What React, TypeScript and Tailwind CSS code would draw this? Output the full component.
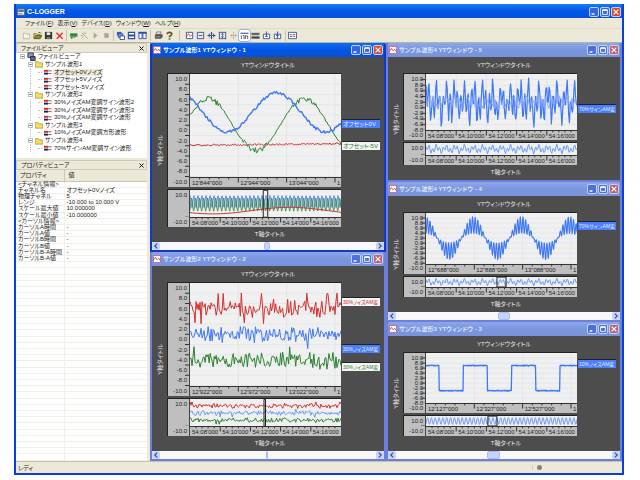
import type { ReactNode } from "react"

const BLUE = "#3f78f5"
const PALE_BLUE = "#6f9cf8"
const GREEN = "#2c8232"
const RED = "#d43030"

type Trace = { color: string; points: string; width?: number }
type Tag = { text: string; top: number; tone: "blue" | "red" | "green" }
type Scope = {
  title: string
  active?: boolean
  traces: Trace[]
  overview: Trace[]
  labels: string[]
  wide?: boolean
  cursor?: [number, number]
  tags: Tag[]
  thumb?: [number, number]
}

// small deterministic generator so the noise is the same on every render
function noise(seed: number) {
  let s = seed
  return () => {
    s = (s * 16807) % 2147483647
    return (s / 2147483647) * 2 - 1
  }
}

// fn gets 0..1 along the time axis and returns 0..100 down the plot
function trace(color: string, steps: number, fn: (t: number) => number, width = 1): Trace {
  const pts: string[] = []
  for (let i = 0; i <= steps; i++) {
    const t = i / steps
    pts.push(`${(t * 300).toFixed(1)},${fn(t).toFixed(1)}`)
  }
  return { color, points: pts.join(" "), width }
}

const wave = (t: number, peak: number, period: number) => Math.cos((2 * Math.PI * (t - peak)) / period)

function noisy(color: string, seed: number, center: number, amp: number, steps = 150) {
  const r = noise(seed)
  return trace(color, steps, () => {
    const v = r() * 0.6 + r() * 0.4
    return center + amp * v * (Math.abs(v) > 0.85 ? 1.5 : 1)
  })
}

const n1 = noise(71)
const n2 = noise(913)
const n3 = noise(417)
const n4 = noise(5521)
const n5 = noise(3313)

const beat = (t: number) => wave(t, 0.01, 0.0612) * 0.55 + wave(t, 0.02, 0.0235) * 0.75

const TIME = ["54:08'000", "54:10'000", "54:12'000", "54:14'000", "54:16'000"]
const VOLTS = ["10.0", "8.0", "6.0", "4.0", "2.0", "0.0", "-2.0", "-4.0", "-6.0", "-8.0", "-10.0"]

const LEFT: Scope[] = [
  {
    title: "サンプル波形1 YTウィンドウ - 1",
    active: true,
    traces: [
      trace(RED, 150, (t) => 69.5 - t * 1.5 + n1() * 0.9),
      trace(GREEN, 150, (t) => 49.5 - 25 * wave(t, 0.122, 0.635) + n2() * (Math.abs(wave(t, 0.122, 0.635)) > 0.7 ? 2.6 : 0.8)),
      trace(BLUE, 150, (t) => 37.5 - 19 * wave(t, 0.573, 0.65) + n3() * 1.4, 1.4),
    ],
    overview: [
      trace(BLUE, 300, (t) => 42 - 22 * wave(t, 0, 0.0265), 0.8),
      trace(GREEN, 300, (t) => 53 - 24 * wave(t, 0.011, 0.0265), 0.8),
      trace(RED, 60, (t) => 75 - 12 * wave(t, 0.66, 1.02)),
    ],
    labels: ["12'844\"000", "12'944\"000", "13'044\"000", "1"],
    wide: true,
    cursor: [48.5, 3],
    tags: [
      { text: "オフセット0V", top: 30, tone: "blue" },
      { text: "オフセット-5V", top: 44, tone: "green" },
    ],
    thumb: [48, 3],
  },
  {
    title: "サンプル波形2 YTウィンドウ - 2",
    traces: [noisy(RED, 331, 24.5, 11), noisy(BLUE, 8087, 50, 10), noisy(GREEN, 4409, 76, 10)],
    overview: [noisy(RED, 92, 25, 11), noisy(PALE_BLUE, 1207, 51, 11), noisy(GREEN, 6653, 77, 11)],
    labels: ["12'922\"000", "12'972\"000", "13'022\"000", "1"],
    wide: true,
    cursor: [49, 1],
    tags: [
      { text: "30%ノイズAM変", top: 10, tone: "red" },
      { text: "30%ノイズAM変", top: 40, tone: "blue" },
      { text: "30%ノイズAM変", top: 52, tone: "green" },
    ],
    thumb: [49, 1],
  },
]

const RIGHT: Scope[] = [
  {
    title: "サンプル波形4 YTウィンドウ - 5",
    traces: [
      trace(BLUE, 200, (t) => 50 - 30 * beat(t) + n4() * 9, 1.2),
      trace("#86a8fb", 150, () => 50 + n5() * 13),
    ],
    overview: [trace(PALE_BLUE, 150, (t) => 50 - 32 * beat(t))],
    labels: TIME,
    tags: [{ text: "70%サインAM変", top: 34, tone: "blue" }],
  },
  {
    title: "サンプル波形4 YTウィンドウ - 4",
    traces: [
      trace(BLUE, 400, (t) => {
        const e = wave(t, -0.005, 0.319)
        return 50 - 26 * e + 17 * Math.abs(e) * wave(t, 0, 0.0176)
      }, 1.1),
    ],
    overview: [trace(PALE_BLUE, 150, (t) => 50 - 30 * beat(t))],
    labels: ["12\"688\"000", "12\"888\"000", "13\"088\"000", "1"],
    wide: true,
    cursor: [47, 6],
    tags: [{ text: "70%サインAM変", top: 10, tone: "blue" }],
    thumb: [47, 6],
  },
  {
    title: "サンプル波形3 YTウィンドウ - 3",
    traces: [
      trace(BLUE, 400, (t) => (Math.floor((t + 0.0747) / 0.1602) % 2 === 0 ? 25 : 75) + n1() * 0.9, 1.3),
    ],
    overview: [trace(PALE_BLUE, 300, (t) => 50 - 34 * wave(t, 0.01, 0.0255))],
    labels: ["12'127\"000", "12'327\"000", "12'527\"000", "1"],
    wide: true,
    cursor: [41, 6],
    tags: [{ text: "10%ノイズAM変", top: 9, tone: "blue" }],
    thumb: [42, 6],
  },
]

const TREE = [
  { name: "サンプル波形1", items: ["オフセット0Vノイズ", "オフセット5Vノイズ", "オフセット-5Vノイズ"] },
  { name: "サンプル波形2", items: ["30%ノイズAM変調サイン波形2", "30%ノイズAM変調サイン波形3", "30%ノイズAM変調サイン波形"] },
  { name: "サンプル波形3", items: ["10%ノイズAM変調方形波形"] },
  { name: "サンプル波形4", items: ["70%サインAM変調サイン波形"] },
]

const PROPS: [string, string][] = [
  ["<チャネル情報>", ""],
  ["チャネル名", "オフセット0Vノイズ"],
  ["物理チャネル", "5"],
  ["レンジ", "-10.000 to 10.000 V"],
  ["スケール最大値", "10.000000"],
  ["スケール最小値", "-10.000000"],
  ["<カーソル情報>", ""],
  ["カーソルA時間", "-"],
  ["カーソルA値", "-"],
  ["カーソルB時間", "-"],
  ["カーソルB値", "-"],
  ["カーソルB-A時間", "-"],
  ["カーソルB-A値", "-"],
]
const BLANK_ROWS = 32

const MENU = [
  ["ファイル", "F"],
  ["表示", "V"],
  ["デバイス", "D"],
  ["ウィンドウ", "W"],
  ["ヘルプ", "H"],
]

const NAVY = "#3a4f9c"
const TOOLS: { gap: string; items: { label: string; art: ReactNode; on?: boolean }[] }[] = [
  {
    gap: "",
    items: [
      { label: "新規", art: <path d="M1.5 2.5h3l1 1h3v5h-7z" fill="#f6f4ea" stroke="#b9b6a8" /> },
      { label: "開く", art: <><path d="M1 8V3h3l1 1h3v1" fill="#f2dc5a" stroke="#5f5a20" strokeWidth=".8" /><path d="M1 8.5l2-3.5h7L8 8.5z" fill="#8d8a28" stroke="#3c3a10" strokeWidth=".7" /><path d="M6 2q2-1.500 3 .8" fill="none" stroke="#222" strokeWidth=".8" /></> },
      { label: "保存", art: <><path d="M1 1h8v8H1z" fill="#32362e" /><path d="M3 1.500h4v3H3z" fill="#e8e8e0" /><path d="M3 6.500h4V9H3z" fill="#777a6c" /></> },
      { label: "削除", art: <path d="M1.5 2l7 6.500M8.500 2L2 8.500" stroke="#d8302c" strokeWidth="1.5" fill="none" /> },
    ],
  },
  {
    gap: "ml-px border-l border-[#c5c2b2] pl-px",
    items: [
      { label: "デバイス", art: <><path d="M1 2.500h8.500v4H1z" fill="#3d9a50" /><path d="M2 6.500h2v2H2zM5 6.500h2v1H5z" fill="#657a4c" /><path d="M3 3.500h2v1.500H3zM6 3.500h2v1.500H6z" fill="#256b38" /></> },
      { label: "設定", art: <path d="M2 2l6.500 6.500M4.500 1v2M1 5h2M7 2L5.500 3.500M2 8l2-2" stroke="#aaa795" strokeWidth="1" fill="none" /> },
      { label: "開始", art: <path d="M3 1.500L7 5 3 8.500z" fill="#a6a596" /> },
      { label: "停止", art: <path d="M2.500 2.500h5v5h-5z" fill="#a6a596" /> },
    ],
  },
  {
    gap: "ml-px border-l border-[#c5c2b2] pl-px",
    items: [
      { label: "重ねて表示", art: <><path d="M1 1h5v4H1z" fill="#3c5ab8" /><path d="M2.500 3h5v4h-5z" fill="#7d98dc" stroke="#2c469c" strokeWidth=".8" /><path d="M4.500 5.500h5v4h-5z" fill="#fff" stroke="#2c469c" /></> },
      { label: "上下に並べて表示", art: <path d="M1.500 1.500h7v3h-7zM1.500 5.500h7v3h-7z" fill="#fff" stroke="#2c4cb0" strokeWidth="1.2" /> },
      { label: "左右に並べて表示", art: <><path d="M1 1.500h3.500v7H1zM5.500 1.500H9v7H5.500z" fill="#fff" stroke="#2c4cb0" /><path d="M.5 2h9" stroke="#2c4cb0" strokeWidth="2" /></> },
    ],
  },
  {
    gap: "ml-0.5 border-l border-[#c5c2b2] pl-0.5",
    items: [
      { label: "印刷", art: <><path d="M3 1h5l-1 3H2z" fill="#ddd" stroke="#444" strokeWidth=".6" /><path d="M1 4.500L3 3.500h6.500V7l-2 1.500H1z" fill="#56544e" /><path d="M2 6.500h5" stroke="#bbb" strokeWidth=".8" /></> },
      { label: "ヘルプ", art: <><path d="M2.500 3.500q0-2 2.500-2t2.500 2q0 1-2.500 2.500V7" fill="none" stroke="#5c5a18" strokeWidth="1.8" /><path d="M4 8h2v1.500H4z" fill="#5c5a18" /></> },
    ],
  },
  {
    gap: "ml-1 border-l border-[#c5c2b2] pl-1",
    items: [
      { label: "波形ウィンドウ", art: <><path d="M1.500 1.500h7v7h-7z" fill="#fff" stroke={NAVY} /><path d="M2 6l2-3 2 3 2-2" fill="none" stroke={RED} strokeWidth=".9" /></> },
      { label: "幅を合わせる", art: <><path d="M1.500 1v8M8.500 1v8" stroke={NAVY} /><path d="M2 1.500h6M2 8.500h6M3 5h4" stroke={NAVY} strokeWidth="1" /></> },
      { label: "横軸拡大", art: <path d="M5 1v8M0.500 5h9M2.500 3v4M7.500 3v4M4 2.500h2M4 7.500h2" stroke={NAVY} strokeWidth="1.1" /> },
      { label: "縦軸拡大", art: <><path d="M1 1.500h8M1 8.500h8M1.500 1v8M8.500 1v8" stroke={NAVY} /><path d="M5 2.500v5M3.800 4L5 2.500 6.200 4M3.800 6L5 7.500 6.200 6" stroke={NAVY} fill="none" strokeWidth=".8" /></> },
      { label: "自動調整", art: <path d="M5 1v3M5 6v3M1 5h8M3 3.500v3M7 3.500v3" stroke="#b5b2a2" /> },
      { label: "目盛", on: true, art: <><path d="M.5 2.500h9" stroke={NAVY} strokeWidth="1.2" /><path d="M1.500 5v4M3 5h1.500v4M6 5v4M6 5.500h2.500V9" stroke="#555" strokeWidth="1" /></> },
      { label: "全体表示", art: <><path d="M0.500 2h9v2.500h-9z" fill="#666" /><path d="M0.500 6h9v2.500h-9z" fill="#444" /><path d="M1 5.200h8" stroke="#9ab" strokeDasharray="1 1" /></> },
      { label: "カーソルA", art: <><path d="M1.500 3.500h7v5h-7z" fill="#fff" stroke={NAVY} /><path d="M5 .5V6M3.500 6h3" stroke={NAVY} /></> },
      { label: "カーソルB", art: <><path d="M1.500 3.500h7v5h-7z" fill="#fff" stroke={NAVY} /><path d="M5 .5V8M3.500 5h3" stroke={NAVY} /></> },
    ],
  },
  {
    gap: "ml-0.5 border-l border-[#c5c2b2] pl-px",
    items: [
      { label: "表示設定", art: <><path d="M.5 1.500h9v7h-9z" fill="#fff" stroke={NAVY} /><path d="M2 4h2M5 4h3M2 6h3M6 6h2" stroke="#556" strokeWidth="1" /></> },
    ],
  },
]

function Icon({ children, className = "size-[10px]" }: { children: ReactNode; className?: string }) {
  return (
    <svg viewBox="0 0 10 10" className={`${className} block shrink-0`} fill="none" aria-hidden="true">
      {children}
    </svg>
  )
}

function Captions({ dim }: { dim?: boolean }) {
  const base = "grid size-[10px] place-items-center rounded-[2px] border border-[#c3d3f8]"
  const blue = dim ? "bg-[#4a70dc]" : "bg-[#3267e6]"
  return (
    <div className="flex shrink-0 gap-px pr-px">
      <button aria-label="最小化" className={`${base} ${blue}`}>
        <Icon className="size-[8px]"><path d="M2 7.500h3.500" stroke="#fff" strokeWidth="1.8" /></Icon>
      </button>
      <button aria-label="最大化" className={`${base} ${blue}`}>
        <Icon className="size-[8px]"><path d="M2 2.500h6v5.500H2z" stroke="#fff" strokeWidth="1.1" /><path d="M2 2.500h6" stroke="#fff" strokeWidth="1.8" /></Icon>
      </button>
      <button aria-label="閉じる" className={`${base} ${dim ? "bg-[#c0606e]" : "bg-[#e0492e]"}`}>
        <Icon className="size-[8px]"><path d="M2 2l6 6M8 2L2 8" stroke="#fff" strokeWidth="1.6" /></Icon>
      </button>
    </div>
  )
}

function Plot({ traces, cols, rows, cursor }: { traces: Trace[]; cols: number[]; rows: number[]; cursor?: [number, number] }) {
  return (
    <div className="relative min-h-0 flex-1 bg-[#f0f0f0]">
      <svg viewBox="0 0 300 100" preserveAspectRatio="none" className="absolute inset-0 size-full">
        {rows.map((y) => <path key={y} d={`M0 ${y}H300`} stroke="#e3e6ea" vectorEffect="non-scaling-stroke" />)}
        {cols.map((x) => <path key={x} d={`M${x * 3} 0V100`} stroke="#e0e4ea" vectorEffect="non-scaling-stroke" />)}
        {traces.map((t, i) => (
          <polyline key={i} points={t.points} fill="none" stroke={t.color} strokeWidth={t.width}
            strokeLinejoin="round" vectorEffect="non-scaling-stroke" />
        ))}
        {cursor && (
          <rect x={cursor[0] * 3} y="1" width={cursor[1] * 3} height="98" fill="none" stroke="#222"
            vectorEffect="non-scaling-stroke" />
        )}
      </svg>
    </div>
  )
}

function Axis({ labels, wide }: { labels: string[]; wide?: boolean }) {
  const step = wide ? 32 : 20
  const minor = Array.from({ length: wide ? 15 : 24 }, (_, i) => (i + 1) * (step / 5))
  return (
    <div className="relative flex h-[10px] shrink-0 overflow-hidden border-t border-[#333] bg-[#bfbfbf]">
      <svg viewBox="0 0 100 10" preserveAspectRatio="none" className="absolute inset-0 size-full">
        {minor.map((x, i) => (
          <path key={i} d={`M${x} 0V${i % 5 === 4 ? 5 : 1.5}`} stroke="#333" vectorEffect="non-scaling-stroke" />
        ))}
      </svg>
      {labels.map((l, i) => (
        <span key={i} className={`relative shrink-0 whitespace-nowrap pl-0.5 pt-px text-[6px] leading-[8px] text-[#222] ${!wide ? "w-1/5" : i < 3 ? "w-[32%]" : "w-[4%]"}`}>
          {l}
        </span>
      ))}
    </div>
  )
}

function Gutter({ labels, ticks }: { labels: string[]; ticks: number[] }) {
  return (
    <div className="relative w-[22px] shrink-0 border-r border-[#444] bg-[#bfbfbf]">
      <div className="flex h-full flex-col justify-between py-[5px] pr-0.5 text-right text-[6px] text-[#222]">
        {labels.map((l) => (
          <span key={l} className="flex h-0 items-center justify-end leading-none">{l}</span>
        ))}
      </div>
      <svg viewBox="0 0 4 100" preserveAspectRatio="none" className="absolute right-0 top-0 h-[calc(100%-10px)] w-1">
        {ticks.map((y) => <path key={y} d={`M0 ${y}H4`} stroke="#333" vectorEffect="non-scaling-stroke" />)}
      </svg>
    </div>
  )
}

const TONES = {
  blue: "bg-[#4a7dff] text-[#e6edff]",
  red: "bg-[#f4f4f4] text-[#c03030]",
  green: "bg-[#f4f4f4] text-[#2c8232]",
}

const TENTHS = [10, 20, 30, 40, 50, 60, 70, 80, 90, 100]

function ScopeWindow({ scope }: { scope: Scope }) {
  const { active, thumb } = scope
  const cols = scope.wide ? [32, 64, 96] : [20, 40, 60, 80]
  return (
    <section className={`flex min-h-0 min-w-0 flex-col overflow-hidden rounded-t-[3px] border-x-2 border-b-2 ${active ? "border-[#1238c8] bg-[#1238c8]" : "border-[#6b80dc] bg-[#6b80dc]"}`}>
      <header className={`flex h-[14px] shrink-0 items-center gap-0.5 pl-px text-white ${active ? "bg-linear-to-b from-[#0f6cf2] via-[#0455e4] to-[#0450dc]" : "bg-linear-to-b from-[#8ea6ea] via-[#7a96df] to-[#7a92dc]"}`}>
        <Icon className="size-[8px]">
          <path d="M.5.500h9v9h-9z" fill="#fff" stroke="#c8507a" />
          <path d="M1 6l2-3 2 3 2-2 2 3" stroke="#d03030" />
        </Icon>
        <h2 className={`flex-1 whitespace-nowrap text-[6px] font-bold leading-[8px] ${active ? "" : "text-[#dfe7fb]"}`}>{scope.title}</h2>
        <Captions dim={!active} />
      </header>
      <div className="flex min-h-0 flex-1 flex-col bg-[#4d4d4d] text-[6px] text-[#e8e8e8]">
        <div className="h-4 shrink-0 text-center leading-4">YTウィンドウタイトル</div>
        <div className="flex min-h-0 flex-1">
          <div className="grid w-[15px] shrink-0 place-items-center">
            <span className="rotate-180 whitespace-nowrap leading-[8px] [text-orientation:sideways] [writing-mode:vertical-rl]">Y軸タイトル</span>
          </div>
          <div className="flex min-w-0 flex-1 flex-col gap-0.5">
            <div className="flex min-h-0 flex-3 border-l border-t border-[#222]">
              <Gutter labels={VOLTS} ticks={TENTHS} />
              <div className="flex min-w-0 flex-1 flex-col">
                <Plot traces={scope.traces} cols={cols} rows={TENTHS} />
                <Axis labels={scope.labels} wide={scope.wide} />
              </div>
            </div>
            <div className="flex min-h-0 flex-1 border-l border-t border-[#222]">
              <Gutter labels={["10.0", "-10.0"]} ticks={[99]} />
              <div className="flex min-w-0 flex-1 flex-col">
                <Plot traces={scope.overview} cols={[]} rows={[50]} cursor={scope.cursor} />
                <Axis labels={TIME} />
              </div>
            </div>
          </div>
          <div className="relative w-[43px] shrink-0">
            {scope.tags.map((t, i) => (
              <span key={i} style={{ top: `${t.top}%` }}
                className={`absolute left-px right-1 h-[9px] whitespace-nowrap border-t border-[#222] pl-px leading-[8px] ${t.text.length > 8 ? "text-[5px]" : ""} ${TONES[t.tone]}`}>
                {t.text}
              </span>
            ))}
          </div>
        </div>
        <div className="h-[15px] shrink-0 pl-1 text-center leading-[15px]">T軸タイトル</div>
      </div>
      {thumb && (
        <div className="flex h-2 shrink-0 bg-[#f8f8fc]">
          <button aria-label="左へ" className="grid w-2 place-items-center rounded-[2px] bg-[#c6d4fb]">
            <Icon className="size-[6px]"><path d="M7 1L3 5l4 4" stroke="#3c5090" strokeWidth="2" /></Icon>
          </button>
          <div className="relative flex-1">
            <div className="absolute inset-y-0 rounded-[2px] border border-[#a9bdf2] bg-[#c6d4fb]"
              style={{ left: `${thumb[0]}%`, width: `${thumb[1]}%` }} />
          </div>
          <button aria-label="右へ" className="grid w-2 place-items-center rounded-[2px] bg-[#c6d4fb]">
            <Icon className="size-[6px]"><path d="M3 1l4 4-4 4" stroke="#3c5090" strokeWidth="2" /></Icon>
          </button>
        </div>
      )}
    </section>
  )
}

function PanelTitle({ children }: { children: ReactNode }) {
  return (
    <div className="flex h-[10px] shrink-0 items-center justify-between border border-[#cfccbb] bg-[#ece9d8] pl-1 pr-0.5 leading-[8px]">
      <span>{children}</span>
      <button aria-label="閉じる"><Icon className="size-[5px]"><path d="M1 1l8 8M9 1L1 9" stroke="#111" strokeWidth="2" /></Icon></button>
    </div>
  )
}

function Expander() {
  return (
    <Icon className="size-[5px]"><path d="M.8.800h8.400v8.400H.8z" fill="#fff" stroke="#98a6bd" strokeWidth="1.6" /><path d="M3 5h4" stroke="#333" strokeWidth="1.6" /></Icon>
  )
}

function FileTree() {
  return (
    <ul className="flex h-[105px] shrink-0 flex-col bg-white pb-[6px] pl-1 leading-[7px] whitespace-nowrap">
      <li className="flex min-h-0 flex-1 items-center gap-0.5">
        <Expander />
        <Icon className="size-[9px]">
          <path d="M1 1h6v5H1z" fill="#8d9cb8" stroke="#333c50" />
          <path d="M4 5h5v4.500H4z" fill="#5a6a8c" stroke="#222a3c" />
        </Icon>
        ファイルビューア
      </li>
      {TREE.map((g, gi) => [
        <li key={g.name} className="ml-2 flex min-h-0 flex-1 items-center gap-0.5">
          <Expander />
          <Icon className="size-[8px]"><path d="M.5 2h3.500l1 1.500h4.500V9h-9z" fill="#f2dc62" stroke="#a08c30" strokeWidth=".8" /></Icon>
          {g.name}
        </li>,
        ...g.items.map((it, i) => (
          <li key={it} className="ml-2.5 flex min-h-0 flex-1 items-center">
            <span className="mr-[7px] w-px self-stretch border-l border-dotted border-[#c4c4c4]" />
            <span className="mr-0.5 w-1 border-t border-dotted border-[#c4c4c4]" />
            <Icon className="mr-px size-[8px]">
              <path d="M0 3.500h5" stroke="#d02a2a" strokeWidth="2.4" />
              <path d="M0 7h5" stroke="#1c2450" strokeWidth="2.4" />
              <path d="M5 3.500h4.500M5 7h4.500" stroke="#9a5560" strokeWidth="1.2" />
            </Icon>
            <span className={`px-px ${gi === 0 && i === 0 ? "bg-[#ece9d8]" : ""}`}>{it}</span>
          </li>
        )),
      ])}
    </ul>
  )
}

function Properties() {
  return (
    <div className="min-h-0 flex-1 overflow-hidden bg-white">
      <table className="h-full w-full table-fixed border-collapse whitespace-nowrap text-left">
        <thead>
          <tr className="h-[11px] bg-[#ece9d8]">
            <th className="w-[48px] border-b border-r border-[#cbc7b8] p-0 pl-1 font-normal leading-[8px]">プロパティ</th>
            <th className="border-b border-[#cbc7b8] p-0 pl-1 font-normal leading-[8px]">値</th>
          </tr>
        </thead>
        <tbody className="leading-[5px]">
          {PROPS.map(([k, v]) => (
            <tr key={k} className="h-[6px] border-b border-[#f1efe6]">
              <td className="border-r border-[#f1efe6] p-0 pl-0.5">{k}</td>
              <td className="p-0 pl-0.5">{v}</td>
            </tr>
          ))}
          {Array.from({ length: BLANK_ROWS }, (_, i) => (
            <tr key={i} className="h-[6px] border-b border-[#f1efe6]">
              <td className="border-r border-[#f1efe6] p-0" />
              <td className="p-0" />
            </tr>
          ))}
        </tbody>
      </table>
    </div>
  )
}

export default function App() {
  return (
    <div className="h-screen bg-white pb-[5px] pl-[14px] pr-4 pt-1 font-['Liberation_Sans','Noto_Sans_CJK_JP',sans-serif] text-[6px] text-[#1c1c1c] [font-feature-settings:'palt']">
      <div className="flex h-full flex-col border-x-2 border-b-2 border-[#0a3fd8] bg-[#ece9d8]">
        <header className="flex h-[14px] shrink-0 items-center gap-0.5 bg-linear-to-b from-[#1a7af5] via-[#0457e6] to-[#0450e0] pl-px pt-px">
          <Icon className="size-[8px]">
            <path d="M.5 1h9v8h-9z" fill="#e6e6da" stroke="#555" />
            <path d="M1.500 2h7v3h-7z" fill="#3f8a80" />
            <path d="M2 7h4" stroke="#777" />
          </Icon>
          <h1 className="flex-1 text-[7px] font-bold leading-[10px] text-white">C-LOGGER</h1>
          <Captions />
        </header>
        <nav className="flex h-[11px] shrink-0 items-center gap-1 border-b border-[#dedbcb] pl-[9px] leading-[8px]">
          {MENU.map(([name, key]) => (
            <button key={key} className="whitespace-nowrap">{name}(<u>{key}</u>)</button>
          ))}
        </nav>
        <div role="toolbar" className="flex h-[13px] shrink-0 items-center pl-[5px]">
          {TOOLS.map((group, gi) => (
            <div key={gi} className={`flex items-center ${group.gap}`}>
              {group.items.map((t) => (
                <button key={t.label} aria-label={t.label} title={t.label}
                  className={`grid size-[11px] place-items-center ${t.on ? "rounded-[2px] bg-white outline outline-[#9fb4dc]" : ""}`}>
                  <Icon className="size-[9px]">{t.art}</Icon>
                </button>
              ))}
            </div>
          ))}
        </div>
        <main className="flex min-h-0 flex-1 border-t border-[#b5b2a2]">
          <aside className="flex w-[131px] shrink-0 flex-col">
            <PanelTitle>ファイルビューア</PanelTitle>
            <FileTree />
            <div className="h-0.5 shrink-0 bg-[#ece9d8]" />
            <PanelTitle>プロパティビューア</PanelTitle>
            <Properties />
          </aside>
          <div className="ml-[3px] grid min-w-0 flex-1 grid-cols-2 bg-[#808080]">
            <div className="grid min-h-0 min-w-0 grid-rows-2">
              {LEFT.map((s) => <ScopeWindow key={s.title} scope={s} />)}
            </div>
            <div className="grid min-h-0 min-w-0 grid-rows-3">
              {RIGHT.map((s) => <ScopeWindow key={s.title} scope={s} />)}
            </div>
          </div>
        </main>
        <footer className="flex h-[12px] shrink-0 items-center border-t border-[#c5c2b2] pl-0.5 leading-[8px]">
          <span className="flex-1">レディ</span>
          <span className="flex w-[90px] items-center border-l border-[#cfccbb] pl-1">
            <Icon className="size-[5px]"><circle cx="5" cy="5" r="5" fill="#85837b" /></Icon>
          </span>
        </footer>
      </div>
    </div>
  )
}
